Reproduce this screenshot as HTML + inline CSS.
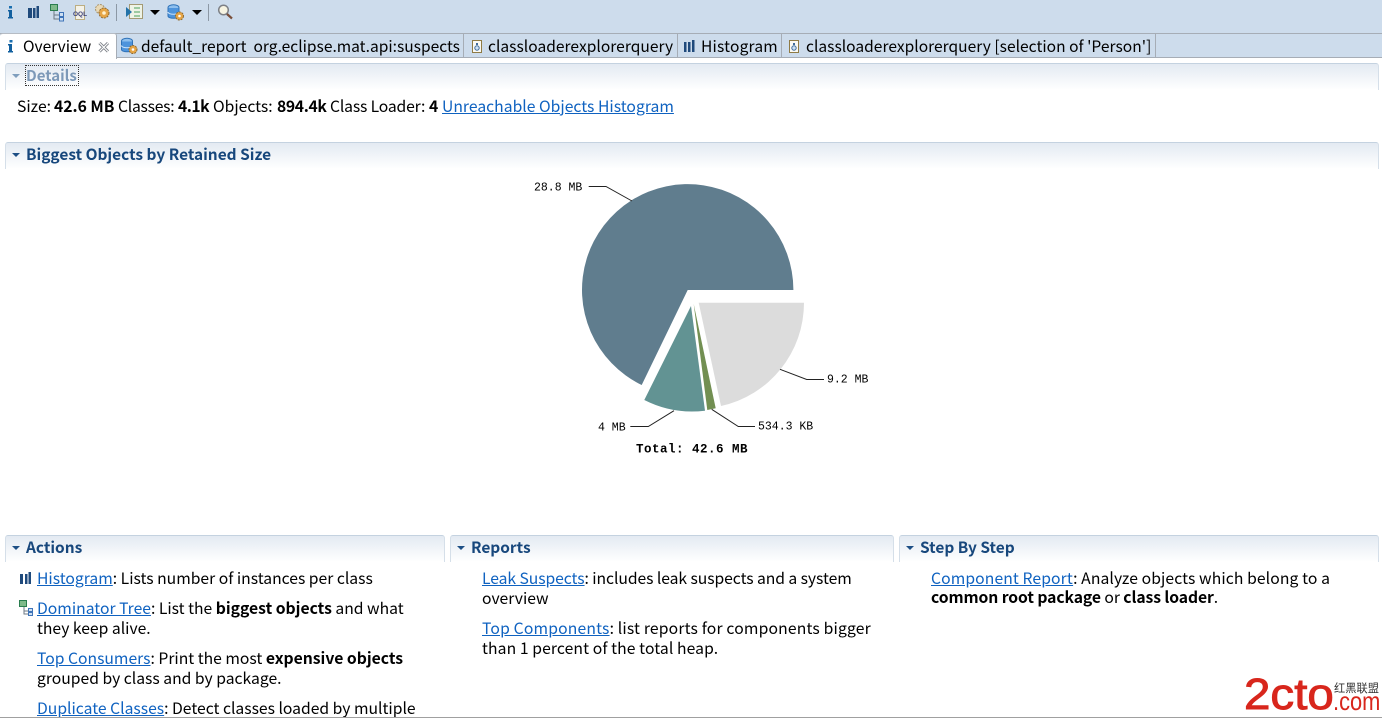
<!DOCTYPE html>
<html><head><meta charset="utf-8"><style>
html,body{margin:0;padding:0;background:#fff}
body{width:1382px;height:720px;overflow:hidden;position:relative;font-family:"Noto Sans CJK SC","Liberation Sans",sans-serif;font-size:15.7px;color:#000}
.t{position:absolute;white-space:nowrap;line-height:20px;height:20px}
a{color:#0f62c0;text-decoration:underline}
b{font-weight:700}
.bar{position:absolute;left:0;top:0;width:1382px;height:34px;background:#cddcec}
.tabs{position:absolute;left:0;top:33px;width:1382px;background:#cddcec;border-top:1px solid #a6adb6;border-bottom:1px solid #a6adb6;box-sizing:border-box;height:25px}
.sep{position:absolute;top:34px;height:23px;width:1px;background:#a6adb6}
.sec{position:absolute;box-sizing:border-box;height:27px;border:1px solid #c4d2e0;border-bottom:0;border-radius:3px 3px 0 0;background:linear-gradient(#e3eaf2,#fff);border-left-color:#d5dfe9;border-right-color:#d5dfe9}
.h{position:absolute;font-weight:700;color:#17477c;font-size:15.45px;line-height:20px;white-space:nowrap}
.tri{position:absolute;width:0;height:0;border-left:4px solid transparent;border-right:4px solid transparent;border-top:4px solid #1d4f85}
svg{position:absolute;overflow:visible}
</style></head><body>
<div class="bar"></div>
<div class="tabs"></div>
<div style="position:absolute;left:0;top:33px;width:117px;height:26px;background:#fff;border-top:1px solid #b6bcc4;box-sizing:border-box;border-right:1px solid #a6adb6;border-radius:3px 3px 0 0"></div>
<div class="sep" style="left:463px"></div><div class="sep" style="left:677px"></div><div class="sep" style="left:781px"></div><div class="sep" style="left:1155px"></div>

<svg style="left:0;top:0" width="240" height="30" viewBox="0 0 240 30">
<rect x="9" y="6" width="3" height="2.5" fill="#1a6fb0"/><path d="M8 10h4v7h1v1.500H8V17h1v-5.500H8z" fill="#12609f"/>
<path d="M28 8h4v10h-4zM33 8h2.500v10H33zM36.500 6H39v12h-2.500z" fill="#1f4a7c"/>
<rect x="50.500" y="4.500" width="7" height="6" fill="#7fba8a" stroke="#2a7d4f"/><path d="M54 11v8h5M54 15h5" stroke="#6d7a85" fill="none"/><rect x="59.500" y="12.500" width="4" height="4" fill="#cfe0f2" stroke="#3f74b8"/><rect x="59.500" y="17.500" width="4" height="3.500" fill="#cfe0f2" stroke="#3f74b8"/>
<rect x="75.500" y="5.500" width="9" height="14" fill="#f4f2e8" stroke="#bcae82"/><text x="73" y="16" font-family="Liberation Sans" font-size="6.500" font-weight="700" fill="#3a3f78">OQL</text>
<circle cx="100" cy="9" r="4.500" fill="#e9d9b6" stroke="#a9946b" stroke-dasharray="2 1"/><circle cx="104" cy="13" r="5" fill="#e6a545" stroke="#8e6a32" stroke-dasharray="2 1"/><circle cx="104" cy="13" r="1.800" fill="#fff2d0"/>
<rect x="116" y="4" width="1" height="17" fill="#8c98a5"/>
<rect x="129.500" y="4.500" width="13" height="14" fill="#eef3e6" stroke="#a39a74"/><path d="M126 7l6 5-6 5z" fill="#2272a8"/><path d="M134 8h6M134 12h6M134 16h6" stroke="#4aa05c"/>
<path d="M150 10h10l-5 5z" fill="#000"/>
<ellipse cx="173.500" cy="7.500" rx="5.500" ry="2.800" fill="#8fc0ee" stroke="#2e72b8"/><path d="M168 8v8c0 3 11 3 11 0V8" fill="#4e94dc" stroke="#2e72b8"/><path d="M168 12c0 3 11 3 11 0" fill="none" stroke="#cfe5fa"/>
<circle cx="179.500" cy="16" r="4" fill="#e6a545" stroke="#8e6a32" stroke-dasharray="2 1"/><circle cx="179.500" cy="16" r="1.300" fill="#fff"/>
<path d="M192 10h10l-5 5z" fill="#000"/>
<rect x="208" y="4" width="1" height="17" fill="#8c98a5"/>
<circle cx="223.500" cy="10" r="4.800" fill="#f7f4e2" stroke="#7d8086" stroke-width="1.500"/><path d="M227 14l5 4.500" stroke="#7a4f3a" stroke-width="2.200"/>
</svg>

<svg style="left:0;top:34px" width="830" height="24" viewBox="0 34 830 24">
<rect x="9.500" y="40" width="3" height="2.500" fill="#1a6fb0"/><path d="M8 44h4v7h1v1.500H8V51h1v-5.500H8z" fill="#12609f"/>
<path d="M99.500 43l8.500 8.500M108 43l-8.500 8.500" stroke="#7c8187" stroke-width="3"/><path d="M99.500 43l8.500 8.500M108 43l-8.500 8.500" stroke="#fff" stroke-width="1.200"/>
<ellipse cx="127" cy="41" rx="5.500" ry="2.800" fill="#8fc0ee" stroke="#2e72b8"/><path d="M121.500 41.500v8c0 3 11 3 11 0v-8" fill="#4e94dc" stroke="#2e72b8"/><path d="M121.500 45.500c0 3 11 3 11 0" fill="none" stroke="#cfe5fa"/><circle cx="133" cy="49.500" r="4" fill="#e6a545" stroke="#8e6a32" stroke-dasharray="2 1"/><circle cx="133" cy="49.500" r="1.300" fill="#fff"/>
<rect x="472.500" y="40.500" width="9" height="12" fill="#fbfaf4" stroke="#8f7b45"/><circle cx="477" cy="48" r="2.200" fill="#cfe2f5" stroke="#3f6b9b"/><rect x="476" y="43" width="2" height="2" fill="#3f6b9b"/>
<path d="M684 42h2.500v10H684zM688 42h2.500v10H688zM692 40h2.500v12H692z" fill="#1f4a7c"/>
<rect x="789.500" y="40.500" width="9" height="12" fill="#fbfaf4" stroke="#8f7b45"/><circle cx="794" cy="48" r="2.200" fill="#cfe2f5" stroke="#3f6b9b"/><rect x="793" y="43" width="2" height="2" fill="#3f6b9b"/>
</svg>

<span class="t" style="left:23px;top:36px;font-size:15.55px">Overview</span>
<span class="t" style="left:141px;top:36px;font-size:15.55px">default_report&nbsp; org.eclipse.mat.api:suspects</span>
<span class="t" style="left:488px;top:36px;font-size:15.55px;letter-spacing:.03px">classloaderexplorerquery</span>
<span class="t" style="left:701px;top:36px;font-size:15.55px;letter-spacing:.2px">Histogram</span>
<span class="t" style="left:806px;top:36px;font-size:15.55px;letter-spacing:.02px">classloaderexplorerquery [selection of 'Person']</span>

<div class="sec" style="left:5px;top:63px;width:1374px"></div>
<div class="tri" style="left:12px;top:74px;border-top-color:#7f9ebd"></div>
<div class="h" style="left:26px;top:66px;color:#7d99b8;outline:1px dotted #333;height:19px;line-height:19px;font-size:15px;padding-right:1px">Details</div>
<span class="t" style="left:17px;top:96px">Size:</span>
<b class="t" style="left:54px;top:96px">42.6 MB</b>
<span class="t" style="left:118px;top:96px;letter-spacing:-.25px">Classes:</span>
<b class="t" style="left:178px;top:96px;letter-spacing:-.5px">4.1k</b>
<span class="t" style="left:213px;top:96px">Objects:</span>
<b class="t" style="left:277px;top:96px;letter-spacing:-.35px">894.4k</b>
<span class="t" style="left:330px;top:96px;letter-spacing:-.15px">Class Loader:</span>
<b class="t" style="left:429px;top:96px">4</b>
<a class="t" style="left:442px;top:96px;letter-spacing:.02px">Unreachable Objects Histogram</a>

<div class="sec" style="left:5px;top:142px;width:1374px"></div>
<div class="tri" style="left:12px;top:153px"></div>
<div class="h" style="left:26px;top:144px">Biggest Objects by Retained Size</div>

<svg style="left:0;top:0" width="1382" height="720" viewBox="0 0 1382 720">
<path d="M687.700 290H793.400A105.700 105.700 0 1 0 641.700 385Z" fill="#607d8e"/>
<path d="M691 306L644.300 400A105.700 105.700 0 0 0 705 410.700Z" fill="#629393"/>
<path d="M693.700 304L707.300 410A105.700 105.700 0 0 0 715.700 408.300Z" fill="#728f52"/>
<path d="M698.700 302.700H804A105.500 105.500 0 0 1 721 406Z" fill="#dcdcdc"/>
<g fill="none" stroke="#222" stroke-width="1">
<path d="M588.700 186.500H606L632 201"/><path d="M780 369.300L806.700 379.500H824"/><path d="M630.300 426.500H648.300L674 410.700"/><path d="M711.700 409.300L738.300 426.500H755"/>
</g>
<g font-family="Liberation Mono" font-size="11.500" fill="#000">
<text x="534" y="190.500">28.8 MB</text>
<text x="827" y="382.500">9.2 MB</text>
<text x="598" y="430.500">4 MB</text>
<text x="758" y="429.500">534.3 KB</text>
<text x="636" y="452.500" font-weight="700" font-size="12.500" letter-spacing=".5">Total: 42.6 MB</text>
</g>
</svg>

<div class="sec" style="left:5px;top:535px;width:440px"></div>
<div class="sec" style="left:450px;top:535px;width:444px"></div>
<div class="sec" style="left:899px;top:535px;width:480px"></div>
<div class="tri" style="left:12px;top:546px"></div><div class="tri" style="left:457px;top:546px"></div><div class="tri" style="left:906px;top:546px"></div>
<div class="h" style="left:26px;top:537px">Actions</div>
<div class="h" style="left:471px;top:537px">Reports</div>
<div class="h" style="left:920px;top:537px">Step By Step</div>

<svg style="left:0;top:560px" width="40" height="60" viewBox="0 560 40 60">
<path d="M20 574h3v10h-3zM25 574h2.500v10H25zM28.500 572H31v12h-2.500z" fill="#1f4a7c"/>
<rect x="19.500" y="600.500" width="7" height="6" fill="#7fba8a" stroke="#2a7d4f"/><path d="M24 607v7h4M24 611h4" stroke="#6d7a85" fill="none"/><rect x="28.500" y="608.500" width="4" height="3" fill="#cfe0f2" stroke="#3f74b8"/><rect x="28.500" y="612.500" width="4" height="3" fill="#cfe0f2" stroke="#3f74b8"/>
</svg>

<span class="t" style="left:37px;top:568px"><a>Histogram</a>: Lists number of instances per class</span>
<span class="t" style="left:37px;top:598px"><a>Dominator Tree</a>: List the <b>biggest objects</b> and what</span>
<span class="t" style="left:37px;top:618px">they keep alive.</span>
<span class="t" style="left:37px;top:648px"><a>Top Consumers</a>: Print the most <b>expensive objects</b></span>
<span class="t" style="left:37px;top:668px">grouped by class and by package.</span>
<span class="t" style="left:37px;top:698px"><a>Duplicate Classes</a>: Detect classes loaded by multiple</span>

<span class="t" style="left:482px;top:568px;letter-spacing:-.06px"><a>Leak Suspects</a>: includes leak suspects and a system</span>
<span class="t" style="left:482px;top:588px">overview</span>
<span class="t" style="left:482px;top:618px;letter-spacing:.17px"><a>Top Components</a>: list reports for components bigger</span>
<span class="t" style="left:482px;top:638px;letter-spacing:.1px">than 1 percent of the total heap.</span>

<span class="t" style="left:931px;top:568px;letter-spacing:.1px"><a>Component Report</a>: Analyze objects which belong to a</span>
<span class="t" style="left:931px;top:587px;letter-spacing:-.08px"><b>common root package</b> or <b>class loader</b>.</span>

<span style="position:absolute;left:1244px;top:667px;font:400 44px/56px 'Liberation Sans',sans-serif;color:#d8261c;-webkit-text-stroke:.9px #d8261c;white-space:nowrap;transform:scaleX(1.08);transform-origin:left top">2cto</span>
<span style="position:absolute;left:1333px;top:691px;font:400 26px/20px 'Liberation Sans',sans-serif;color:#d8261c;white-space:nowrap;transform:scaleX(.84);transform-origin:left top">.com</span>
<span style="position:absolute;left:1334px;top:682px;font:400 11.250px/12px 'Noto Sans CJK SC',sans-serif;color:#333;white-space:nowrap">红黑联盟</span>
<div style="position:absolute;left:0;top:717px;width:1382px;height:1px;background:#a0a0a0"></div>
</body></html>
